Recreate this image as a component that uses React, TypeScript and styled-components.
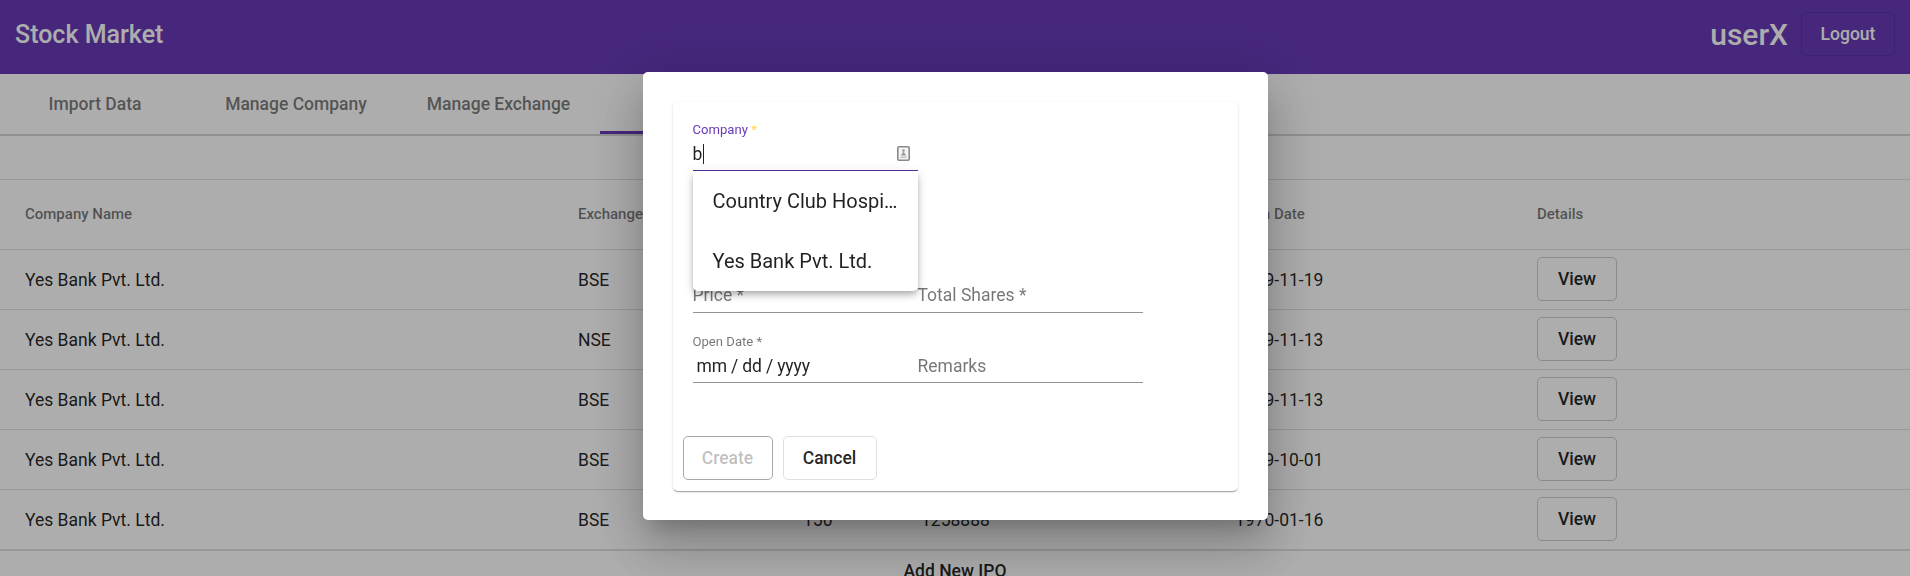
import styled, { createGlobalStyle } from "styled-components";

const GlobalStyle = createGlobalStyle`
  html, body {
    margin: 0;
    height: 576px;
    overflow: hidden;
    background: #fff;
    font-family: Roboto, "Helvetica Neue", sans-serif;
  }
`;

const Toolbar = styled.header`
  display: flex;
  align-items: center;
  box-sizing: border-box;
  height: 74px;
  padding: 0 15px 6px;
  background-color: #673ab7;
  color: #fff;
`;

const Title = styled.span`
  font-size: 25px;
  font-weight: 500;
  flex: 1;
`;

const UserName = styled.span`
  font-size: 30px;
  font-weight: 500;
  margin-right: 13px;
`;

const LogoutButton = styled.button`
  width: 94px;
  height: 44px;
  background: transparent;
  border: 1px solid rgba(0, 0, 0, 0.12);
  border-radius: 5px;
  color: #fff;
  font: 500 17.5px Roboto, sans-serif;
`;

const TabBar = styled.nav`
  display: flex;
  height: 62px;
  box-sizing: border-box;
  border-bottom: 2px solid #d6d6d6;
`;

const Tab = styled.div<{ $width: number; $active?: boolean }>`
  display: flex;
  align-items: center;
  justify-content: center;
  box-sizing: border-box;
  width: ${({ $width }) => $width}px;
  height: 60px;
  font-size: 17.5px;
  font-weight: 500;
  color: rgba(0, 0, 0, 0.87);
  opacity: ${({ $active }) => ($active ? 1 : 0.6)};
  border-bottom: ${({ $active }) => ($active ? "3px solid #673ab7" : "none")};
`;

const Table = styled.section`
  margin-top: 43px;
  border-top: 1px solid #e0e0e0;
`;

const Row = styled.div<{ $head?: boolean; $last?: boolean }>`
  display: grid;
  grid-template-columns: 553px 225px 118px 314px 302px 1fr;
  align-items: center;
  box-sizing: border-box;
  height: ${({ $head, $last }) => ($head ? 70 : $last ? 61 : 60)}px;
  padding-left: 25px;
  padding-bottom: ${({ $head }) => ($head ? 2 : 0)}px;
  border-bottom: ${({ $last }) => ($last ? 2 : 1)}px solid #e0e0e0;
  font-size: ${({ $head }) => ($head ? 15 : 17.5)}px;
  font-weight: ${({ $head }) => ($head ? 500 : 400)};
  color: ${({ $head }) => ($head ? "rgba(0, 0, 0, 0.54)" : "rgba(0, 0, 0, 0.87)")};
`;

const ViewCell = styled.div`
  display: flex;
  padding-bottom: 2px;
`;

const ViewButton = styled.button`
  width: 80px;
  height: 44px;
  background: transparent;
  border: 1px solid rgba(0, 0, 0, 0.2);
  border-radius: 5px;
  color: rgba(0, 0, 0, 0.87);
  font: 500 17.5px Roboto, sans-serif;
`;

const AddRow = styled.div`
  padding-top: 10px;
  text-align: center;
  font-size: 17.5px;
  font-weight: 500;
  color: rgba(0, 0, 0, 0.87);
`;

const Backdrop = styled.div`
  position: fixed;
  inset: 0;
  display: flex;
  justify-content: center;
  align-items: flex-start;
  padding-top: 72px;
  background: rgba(0, 0, 0, 0.32);
`;

const Dialog = styled.div`
  box-sizing: border-box;
  width: 625px;
  padding: 30px 30px 29px;
  background: #fff;
  border-radius: 5px;
  box-shadow: 0 14px 19px -9px rgba(0, 0, 0, 0.2), 0 30px 48px 4px rgba(0, 0, 0, 0.14),
    0 11px 58px 10px rgba(0, 0, 0, 0.12);
`;

const Card = styled.form`
  padding-bottom: 11px;
  background: #fff;
  border-radius: 5px;
  box-shadow: 0 2px 1px -1px rgba(0, 0, 0, 0.2), 0 1px 1px 0 rgba(0, 0, 0, 0.14),
    0 1px 3px 0 rgba(0, 0, 0, 0.12);
`;

const FieldGrid = styled.div`
  display: grid;
  grid-template-columns: 225px 225px;
  grid-template-rows: 69px 71px 71px 70px;
  padding-left: 20px;
`;

const FieldCol = styled.div<{ $active?: boolean; $lift?: boolean }>`
  position: relative;
  display: flex;
  flex-direction: column;
  justify-content: flex-end;
  box-sizing: border-box;
  padding-bottom: ${({ $lift }) => ($lift ? 7 : 6)}px;
  border-bottom: 1px solid ${({ $active }) => ($active ? "#56349a" : "#949494")};
`;

const FloatLabel = styled.label<{ $active?: boolean }>`
  margin-bottom: 6px;
  font-size: 13.1px;
  line-height: 16px;
  color: ${({ $active }) => ($active ? "#673ab7" : "rgba(0, 0, 0, 0.54)")};
`;

const Required = styled.span`
  color: #ffd740;
`;

const InputText = styled.div<{ $placeholder?: boolean; $inset?: boolean }>`
  display: flex;
  align-items: center;
  height: 20px;
  font-size: 17.5px;
  line-height: 20px;
  padding-left: ${({ $inset }) => ($inset ? 4 : 0)}px;
  letter-spacing: ${({ $inset }) => ($inset ? "-0.15px" : "normal")};
  color: ${({ $placeholder }) => ($placeholder ? "rgba(0, 0, 0, 0.54)" : "rgba(0, 0, 0, 0.87)")};
`;

const Caret = styled.span`
  width: 1px;
  height: 20px;
  margin-left: 1px;
  background: #222;
`;

const ContactIcon = styled.svg`
  position: absolute;
  right: 8px;
  bottom: 9px;
  width: 13px;
  height: 15px;
`;

const Dropdown = styled.ul`
  position: absolute;
  top: calc(100% + 1px);
  left: 0;
  z-index: 2;
  width: 225px;
  margin: 0;
  padding: 0;
  list-style: none;
  background: #fff;
  border-radius: 0 0 5px 5px;
  box-shadow: 0 3px 6px -2px rgba(0, 0, 0, 0.2), 0 5px 7px 0 rgba(0, 0, 0, 0.14),
    0 2px 12px 0 rgba(0, 0, 0, 0.12);
`;

const Option = styled.li`
  box-sizing: border-box;
  height: 60px;
  padding: 0 20px;
  font-size: 20px;
  line-height: 60px;
  color: rgba(0, 0, 0, 0.87);
  white-space: nowrap;
  overflow: hidden;
  text-overflow: ellipsis;
`;

const Actions = styled.div`
  display: flex;
  gap: 10px;
  margin-top: 53px;
  padding-left: 10px;
`;

const ActionButton = styled.button<{ $disabled?: boolean }>`
  box-sizing: border-box;
  height: 44px;
  width: ${({ $disabled }) => ($disabled ? 90 : 94)}px;
  background: #fff;
  border: 1px solid ${({ $disabled }) => ($disabled ? "#a8a8a8" : "#e0e0e0")};
  border-radius: 5px;
  color: ${({ $disabled }) => ($disabled ? "rgba(0, 0, 0, 0.26)" : "rgba(0, 0, 0, 0.87)")};
  font: 500 17.5px Roboto, sans-serif;
`;

const rows = [
  { exchange: "BSE", price: "150", shares: "1258888", date: "2019-11-19" },
  { exchange: "NSE", price: "150", shares: "1258888", date: "2019-11-13" },
  { exchange: "BSE", price: "150", shares: "1258888", date: "2019-11-13" },
  { exchange: "BSE", price: "150", shares: "1258888", date: "2019-10-01" },
  { exchange: "BSE", price: "150", shares: "1258888", date: "1970-01-16" },
];

const App = () => {
  return (
    <>
      <GlobalStyle />
      <Toolbar>
        <Title>Stock Market</Title>
        <UserName>userX</UserName>
        <LogoutButton>Logout</LogoutButton>
      </Toolbar>
      <TabBar>
        <Tab $width={190}>Import Data</Tab>
        <Tab $width={212}>Manage Company</Tab>
        <Tab $width={193}>Manage Exchange</Tab>
        <Tab $width={5} />
        <Tab $width={200} $active>
          Manage IPO
        </Tab>
      </TabBar>
      <Table>
        <Row $head>
          <span>Company Name</span>
          <span>Exchange</span>
          <span>Price</span>
          <span>Total Shares</span>
          <span>Open Date</span>
          <span>Details</span>
        </Row>
        {rows.map((row, i) => (
          <Row key={i} $last={i === rows.length - 1}>
            <span>Yes Bank Pvt. Ltd.</span>
            <span>{row.exchange}</span>
            <span>{row.price}</span>
            <span>{row.shares}</span>
            <span>{row.date}</span>
            <ViewCell>
              <ViewButton>View</ViewButton>
            </ViewCell>
          </Row>
        ))}
      </Table>
      <AddRow>Add New IPO</AddRow>

      <Backdrop>
        <Dialog>
          <Card>
            <FieldGrid>
              <FieldCol $active>
                <FloatLabel $active>
                  Company <Required>*</Required>
                </FloatLabel>
                <InputText>
                  b<Caret />
                </InputText>
                <ContactIcon viewBox="0 0 13 15">
                  <rect x="0.8" y="0.8" width="11.4" height="13.4" rx="1.2" fill="#f4f4f4" stroke="#8a8a8a" strokeWidth="1.6" />
                  <circle cx="6.5" cy="4.6" r="1.3" fill="#9a9a9a" />
                  <path d="M6.5 5.6L9.3 9.4H3.7z" fill="#9a9a9a" />
                  <path d="M3.4 11.2h6.2" stroke="#b5b5b5" strokeWidth="1.2" />
                </ContactIcon>
                <Dropdown>
                  <Option>Country Club Hospitality</Option>
                  <Option>Yes Bank Pvt. Ltd.</Option>
                </Dropdown>
              </FieldCol>
              <div />
              <FieldCol>
                <InputText $placeholder>Stock Exchange *</InputText>
              </FieldCol>
              <div />
              <FieldCol $lift>
                <InputText $placeholder>Price *</InputText>
              </FieldCol>
              <FieldCol $lift>
                <InputText $placeholder>Total Shares *</InputText>
              </FieldCol>
              <FieldCol>
                <FloatLabel>Open Date *</FloatLabel>
                <InputText $inset>mm / dd / yyyy</InputText>
              </FieldCol>
              <FieldCol>
                <InputText $placeholder>Remarks</InputText>
              </FieldCol>
            </FieldGrid>
            <Actions>
              <ActionButton type="button" $disabled>
                Create
              </ActionButton>
              <ActionButton type="button">Cancel</ActionButton>
            </Actions>
          </Card>
        </Dialog>
      </Backdrop>
    </>
  );
};

export default App;
